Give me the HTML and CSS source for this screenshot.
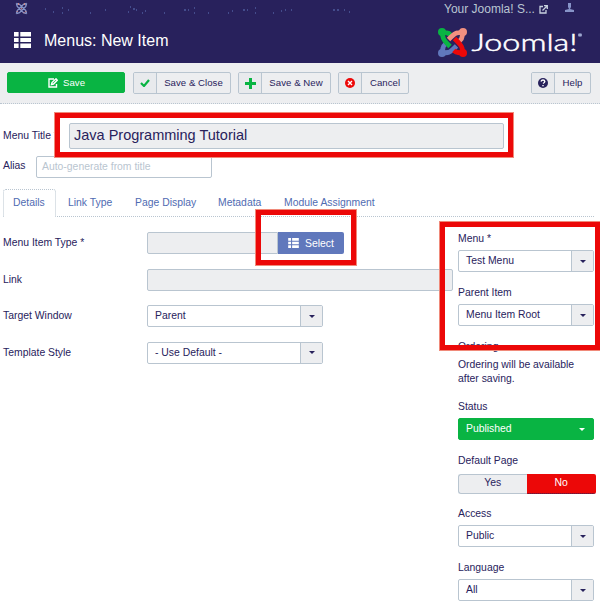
FILE: index.html
```
<!DOCTYPE html>
<html lang="en">
<head>
<meta charset="utf-8">
<title>Menus: New Item</title>
<link rel="stylesheet" href="styles.css">
</head>
<body>
<svg class="defs" width="0" height="0">
  <symbol id="list" viewBox="0 0 17 16"><path d="M0 0h4.600v4.400H0zM6.300 0H17v4.400H6.300zM0 6h4.600v4H0zM6.300 6H17v4H6.300zM0 11.600h4.600V16H0zM6.300 11.600H17V16H6.300z"/></symbol>
</svg>
<header class="header">
  <div class="topbar">
    <svg class="mini-knot" width="13" height="13" viewBox="0 0 29 29"><path d="M3 3L10 5L24 19L26 26M26 3L19 5L5 19L3 26M3 3L5 10L19 24L26 26M26 3L24 10L10 24L3 26"/><path class="glint" d="M8 3v3M21 3v3M13 15h3M5 20v2M19 24h2M24 20v2"/></svg>
    <svg class="specks" width="320" height="10" viewBox="0 0 320 10"><path d="M3 3h1m7 3h1m8-4h1m-1 5h1m5-3h1m21 3h1m14-3h1m22 2h1m1-5h1m2 2h2m1 1h1m5 3h1m2-2h1m18 2h1m19-3h2m2 0h1m5-2h1m-1 5h1m13 0h1m19 0h1m3-2h1m10-1h2m2 0h1m7-2h1m-1 5h1m17 0h1m7-2h1m3-1h1m5 0h1m41 0h2m2 0h2m5 0h1m4 2h1"/></svg>
    <span class="site">Your Joomla! S...</span>
    <svg class="ext" width="9" height="9" viewBox="0 0 9 9"><path d="M4 1.500H1v6.500h6V5M3.500 5.500L8 1M5 .7h3.300V4"/></svg>
    <svg class="user" width="9" height="9" viewBox="0 0 9 9"><path d="M3 0h3v4l-1 2 4 1v2H0V7l4-1-1-2z"/></svg>
  </div>
  <div class="headline">
    <svg class="list-icon" width="17" height="16"><use href="#list"/></svg>
    <h1>Menus: New Item</h1>
    <svg class="logo" width="146" height="30" viewBox="0 0 146 30">
      <g class="knot">
        <path class="k-blue" d="M4 25L5 20Q5 18 7.500 16M4 25L10 24.500Q12 24.500 18.500 18"/>
        <path class="k-green" d="M4 4L9 5Q11 5 13 7.500M4 4L5 9Q5 11.500 12 18.500"/>
        <path class="k-peach" d="M25 4L24 9Q24 11 21.500 13M25 4L19 5Q17 5 10.500 11.500"/>
        <path class="k-red" d="M25 25L20 24.500Q18 24.500 15.800 22.500M25 25L24 20Q24 18 16.500 10.500"/>
      </g>
      <circle class="k-bluef" cx="4" cy="25" r="4"/><circle class="k-greenf" cx="4" cy="4" r="4"/>
      <circle class="k-peachf" cx="25" cy="4" r="4"/><circle class="k-redf" cx="25" cy="25" r="4"/>
      <text x="33.500" y="23.300" textLength="106" lengthAdjust="spacingAndGlyphs">Joomla!</text>
      <path class="reg" d="M142 5v4M140 6l4 2M140 8l4-2"/>
    </svg>
  </div>
</header>
<nav class="toolbar">
  <button class="btn save"><svg width="10" height="10" viewBox="0 0 10 10"><path d="M6 1H1v8h7.500V6M3.500 6.500l.5-2L8 .8l1.200 1.400L5.500 6z"/></svg><span>Save</span></button>
  <button class="btn close"><i><svg width="10" height="8" viewBox="0 0 10 8"><path class="tick" d="M1 4l3 3 5-6"/></svg></i><span>Save &amp; Close</span></button>
  <button class="btn new"><i><svg width="11" height="11" viewBox="0 0 11 11"><path class="plus" d="M5.500 0v11M0 5.500h11"/></svg></i><span>Save &amp; New</span></button>
  <button class="btn cancel"><i><svg width="10" height="10" viewBox="0 0 10 10"><circle class="red" cx="5" cy="5" r="5"/><path class="cross" d="M3 3l4 4M7 3L3 7"/></svg></i><span>Cancel</span></button>
  <button class="btn help"><i><svg width="10" height="10" viewBox="0 0 10 10"><circle class="navy" cx="5" cy="5" r="5"/><path class="cross" d="M3 3.500Q3.500 2 5 2t1.800 1.500Q6.800 4.500 5 5.500M5 7v1.200"/></svg></i><span>Help</span></button>
</nav>
<main>
  <div class="title-row"><label>Menu Title *</label><div class="title-box"><div class="field title">Java Programming Tutorial</div></div></div>
  <div class="alias-row"><label>Alias</label><div class="field alias">Auto-generate from title</div></div>
  <div class="tabs"><a class="active">Details</a><a class="t2">Link Type</a><a class="t3">Page Display</a><a class="t4">Metadata</a><a class="t5">Module Assignment</a></div>
  <div class="columns">
    <section class="form">
      <div class="row"><label>Menu Item Type *</label><div class="field short"></div><button class="pick"><svg width="11" height="10"><use href="#list"/></svg>Select</button></div>
      <div class="row"><label>Link</label><div class="field long"></div></div>
      <div class="row"><label>Target Window</label><div class="select wide"><span>Parent</span><b></b></div></div>
      <div class="row"><label>Template Style</label><div class="select wide"><span>- Use Default -</span><b></b></div></div>
    </section>
    <aside>
      <label>Menu *</label><div class="select"><span>Test Menu</span><b></b></div>
      <label>Parent Item</label><div class="select"><span>Menu Item Root</span><b></b></div>
      <label>Ordering</label><p>Ordering will be available<br>after saving.</p>
      <label>Status</label><div class="select green"><span>Published</span><b></b></div>
      <label>Default Page</label><div class="toggle"><span>Yes</span><span class="no">No</span></div>
      <label>Access</label><div class="select"><span>Public</span><b></b></div>
      <label>Language</label><div class="select"><span>All</span><b></b></div>
    </aside>
  </div>
</main>
<div class="mark mark-title"></div>
<div class="mark mark-select"></div>
<div class="mark mark-menu"></div>
</body>
</html>
```
FILE: styles.css
```
* { box-sizing: border-box; }
body { margin: 0; width: 600px; height: 601px; overflow: hidden; position: relative; background: #fff; color: #28225c; font: 10.4px/14px "Liberation Sans", Arial, sans-serif; }
.defs { position: absolute; }
label { white-space: nowrap; }
button { font: inherit; border: 0; padding: 0; margin: 0; }
.header { height: 63px; background: #28215c; color: #fff; }
.topbar { display: flex; height: 18px; padding: 2px 26px 0 15px; align-items: flex-start; }
.mini-knot { fill: none; stroke: #8794c8; stroke-width: 3; flex: none; }
.mini-knot .glint { stroke: #f09078; stroke-width: 2.5; }
.specks { margin: 4px 0 0 14px; stroke: #6078bc; fill: none; flex: none; }
.site { margin-left: 82px; font-size: 12px; color: #b9c5d2; width: 92px; white-space: nowrap; flex: none; }
.ext { margin: 3px 0 0 3px; fill: none; stroke: #c7d1df; stroke-width: 1.3; flex: none; }
.user { margin: 1px 0 0 17px; fill: #8794c8; flex: none; }
.headline { height: 45px; display: flex; align-items: flex-start; padding: 9px 16px 0 14px; }
.list-icon { margin-top: 5px; fill: #fff; }
h1 { font-size: 16px; line-height: 20px; font-weight: 400; margin: 4px 0 0 13px; flex: 1; }
.logo { width: 146px; height: 30px; margin: 1px 0 0; overflow: visible; flex: none; }
.logo text { fill: #fff; stroke: #fff; stroke-width: .5; font: 300 23.500px Lato, sans-serif; }
.knot { fill: none; stroke-width: 4.8; stroke-linejoin: round; }
.reg { stroke: #a9b5dc; stroke-width: 1; }
.k-blue { stroke: #6078bc; } .k-green { stroke: #09b443; } .k-peach { stroke: #f29080; } .k-red { stroke: #ec0808; }
.k-bluef { fill: #6078bc; } .k-greenf { fill: #09b443; } .k-peachf { fill: #f29080; } .k-redf { fill: #ec0808; }
.toolbar { height: 41px; background: #edeef0; border-bottom: 1px dotted #b9c5d0; padding: 9px 8px 0 7px; display: flex; }
.btn { display: flex; align-items: stretch; height: 22px; border: 1px solid #b9c5d0; border-radius: 2px; background: #edeef0; color: #28225c; font-size: 9.6px; line-height: 20px; overflow: hidden; }
.btn span { flex: 1; text-align: center; white-space: nowrap; letter-spacing: .05px; }
.btn i { width: 23px; border-right: 1px solid #b9c5d0; display: flex; align-items: center; justify-content: center; background: #e8eaed; }
.btn svg { fill: none; }
.save { width: 118px; height: 21px; background: #09b443; border-color: #09b443; color: #fff; justify-content: center; align-items: center; gap: 5px; margin-right: 8px; padding-left: 1px; }
.save span { flex: none; }
.save svg { stroke: #fff; stroke-width: 1.4; }
.close { width: 98px; margin-right: 7px; }
.new { width: 93px; margin-right: 7px; }
.cancel { width: 71px; }
.help { width: 60px; margin: 0 1px 0 auto; }
.tick { stroke: #09b443; stroke-width: 2.2; } .plus { stroke: #09b443; stroke-width: 3; }
.red { fill: #ec0808; } .navy { fill: #28225c; } .cross { stroke: #fff; stroke-width: 1.4; }
.field { background: #edeef0; border: 1px solid #b9c5d0; border-radius: 2px; height: 22px; }
.title-row { display: flex; padding: 19px 0 0 3px; align-items: center; height: 45px; }
.title-row label { width: 66px; }
.title { width: 435px; height: 26px; padding-left: 4px; font-size: 14.500px; line-height: 23px; }
.alias-row { display: flex; padding: 7px 0 0 3px; height: 40px; }
.alias-row label { width: 33px; padding-top: 3px; }
.alias { width: 176px; background: #fff; color: #b9c5d0; padding-left: 5px; line-height: 20px; }
.tabs { height: 28px; margin: 0 6px 0 3px; border-bottom: 1px dotted #b9c5d0; display: flex; color: #506bb2; line-height: 27px; }
.tabs a { white-space: nowrap; }
.active { width: 53px; height: 28px; border: 1px dotted #b9c5d0; border-bottom: 0; border-radius: 3px 3px 0 0; padding-left: 9px; background: #fff; line-height: 25px; }
.t2 { padding-left: 12px; width: 79px; } .t3 { width: 83px; } .t4 { width: 66px; }
.columns { display: flex; }
.form { width: 458px; padding: 15px 0 0 3px; display: grid; grid-template-rows: 22px 22px 22px 22px; row-gap: 14.600px; align-content: start; }
.row { display: flex; line-height: 21px; }
.row label { width: 144px; }
.short { width: 131px; border-radius: 2px 0 0 2px; }
.long { width: 306px; }
.pick { width: 66px; height: 22px; background: #6078bc; color: #fff; display: flex; align-items: center; padding-left: 10px; gap: 6px; border-radius: 0 2px 2px 0; }
.pick svg { fill: #fff; }
.select { width: 136px; height: 22px; border: 1px solid #b9c5d0; border-radius: 2px; display: flex; line-height: 19px; background: #fff; }
.select span { flex: 1; padding-left: 7px; white-space: nowrap; }
.select b { width: 22px; border-left: 1px solid #b9c5d0; background: #edeef0; display: flex; align-items: center; justify-content: center; }
.select b::after { content: ""; border: 3px solid transparent; border-top-color: #28225c; border-bottom: 0; }
.select.wide { width: 176px; }
aside { width: 138px; padding-top: 15px; }
aside label { display: block; height: 18px; }
aside .select { margin-bottom: 14px; }
aside p { margin: 0 0 14px; height: 28px; white-space: nowrap; }
.select.green { background: #09b443; border-color: #09b443; color: #fff; }
.green b { background: none; border: 0; }
.select.green b::after { border-top-color: #fff; }
.toggle { display: flex; width: 138px; height: 20px; margin: 2px 0 13px; text-align: center; line-height: 16px; }
.toggle span { flex: 1; border: 1px solid #b9c5d0; border-right: 0; border-radius: 3px 0 0 3px; background: #edeef0; }
.toggle .no { background: #ec0808; color: #fff; border: 1px solid #ec0808; border-bottom: 1px dotted #28225c; border-radius: 0 2px 2px 0; }
.mark { position: absolute; border: 6px solid #ec0808; outline: 1px solid #f08a7a; outline-offset: -1px; pointer-events: none; }
.mark-title { left: 54px; top: 112px; width: 460px; height: 46px; }
.mark-select { left: 255px; top: 209px; width: 102px; height: 57px; }
.mark-menu { left: 439px; top: 221px; width: 162px; height: 130px; }
```
